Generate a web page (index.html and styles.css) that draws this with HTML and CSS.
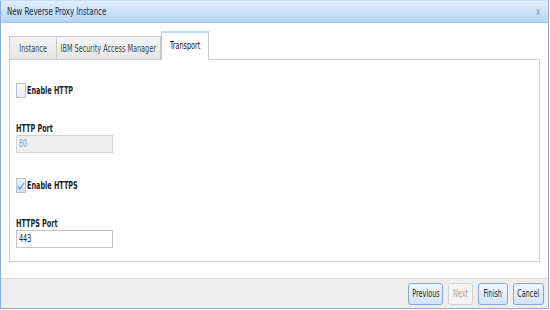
FILE: index.html
```html
<!DOCTYPE html>
<html>
<head>
<meta charset="utf-8">
<link rel="stylesheet" href="styles.css">
</head>
<body>
<div class="dialog">
  <div class="titlebar">
    <span class="t title">New Reverse Proxy Instance</span>
    <span class="t close">x</span>
  </div>
  <div class="body">
    <div class="tabs">
      <div class="tab w1"><span class="t c">Instance</span></div>
      <div class="tab w2"><span class="t c">IBM Security Access Manager</span></div>
      <div class="tab w3 active"><span class="t c">Transport</span></div>
    </div>
    <div class="panel">
      <div class="check"><span class="box"></span><span class="t">Enable HTTP</span></div>
      <div class="field">
        <div class="flabel"><span class="t">HTTP Port</span></div>
        <div class="input disabled"><span class="t">80</span></div>
      </div>
      <div class="check"><span class="box checked"><svg width="8" height="10" viewBox="0 0 8 10"><path d="M1 5.5 L3 8 L7 2" fill="none" stroke="#6f9bd0" stroke-width="1.3"/></svg></span><span class="t">Enable HTTPS</span></div>
      <div class="field">
        <div class="flabel"><span class="t">HTTPS Port</span></div>
        <div class="input"><span class="t">443</span></div>
      </div>
    </div>
  </div>
  <div class="footer">
    <div class="btn b1"><span class="t c">Previous</span></div>
    <div class="btn b2 disabled"><span class="t c">Next</span></div>
    <div class="btn b3"><span class="t c">Finish</span></div>
    <div class="btn b4"><span class="t c">Cancel</span></div>
  </div>
</div>
</body>
</html>
```
FILE: styles.css
```css
html, body { margin: 0; padding: 0; background: #fff; }
body {
  font-family: "DejaVu Sans Condensed", "DejaVu Sans", sans-serif;
  font-size: 10px;
  color: #1e1e1e;
}
.t {
  display: inline-block;
  white-space: nowrap;
  transform: scaleX(0.72);
  transform-origin: 0 50%;
}
.t.c { transform-origin: 50% 50%; }
.dialog {
  width: 547px;
  height: 307px;
  border: 1px solid #8eaed4;
  border-top-color: #c9ddf5;
  display: flex;
  flex-direction: column;
  background: #fff;
}
.titlebar {
  height: 21px;
  flex: none;
  background: linear-gradient(#e2edfb, #b6d5f8);
  border-bottom: 1px solid #a3c5ec;
  display: flex;
  align-items: center;
  justify-content: space-between;
  padding: 0 0 0 6px;
  font-size: 11px;
  color: #1c2a3a;
}
.title { transform: scaleX(0.71); }
.close { color: #8795a5; font-size: 11px; width: 12px; }
.body {
  flex: 1;
  min-height: 0;
  padding: 8px 8px 16px 8px;
  display: flex;
  flex-direction: column;
}
.tabs { display: flex; align-items: flex-end; height: 28px; flex: none; }
.tab {
  height: 23px;
  box-sizing: border-box;
  border: 1px solid #c8c8c8;
  border-bottom: none;
  background: linear-gradient(#f6f6f6, #e4e4e4);
  display: flex;
  align-items: center;
  justify-content: center;
  color: #454545;
}
.tab + .tab { border-left: none; }
.w1 { width: 48px; }
.w2 { width: 104px; }
.w3 { width: 48px; }
.tab.active {
  height: 29px;
  background: #fff;
  border-top: 2px solid #c8dcf2;
  border-left: 1px solid #c8c8c8;
  color: #111;
  margin-bottom: -1px;
  position: relative;
  z-index: 1;
  padding-bottom: 3px;
}
.panel {
  box-sizing: border-box;
  border: 1px solid #cfcfcf;
  height: 203px;
  flex: none;
  padding: 23px 6px 0 6px;
  overflow: hidden;
}
.check {
  display: flex;
  align-items: center;
  font-weight: bold;
  height: 15px;
}
.box {
  width: 8px; height: 13px;
  border: 1px solid #b8c3cf;
  background: linear-gradient(#fbfbfb, #e6ebf1);
  margin-right: 1px;
  display: flex; align-items: center; justify-content: center;
  flex: none;
}
.box.checked { background: linear-gradient(#edf3f9, #d3dfec); }
.field { margin: 25px 0 25px; }
.flabel { font-weight: bold; height: 12px; line-height: 12px; }
.input {
  width: 93px; height: 16px;
  border: 1px solid #c4c4c4;
  padding: 0 0 0 2px;
  line-height: 16px;
  background: #fff;
}
.input.disabled { background: #eeeeee; color: #9a9a9a; border-color: #d4d4d4; }
.footer {
  height: 29px;
  flex: none;
  border-top: 1px solid #dadada;
  background: #eeeeee;
  display: flex;
  align-items: center;
  justify-content: flex-end;
  padding: 0 4px 0 0;
  gap: 5px;
}
.btn {
  box-sizing: border-box;
  height: 22px;
  border: 1px solid #86a9d0;
  border-radius: 3px;
  background: linear-gradient(#f2f7fd, #d2e3f7);
  display: flex; align-items: center; justify-content: center;
}
.b1 { width: 35px; }
.b2 { width: 25px; }
.b3 { width: 30px; }
.b4 { width: 31px; }
.btn.disabled { border-color: #d2d2d2; background: #f4f4f4; color: #a8a8a8; }
```
